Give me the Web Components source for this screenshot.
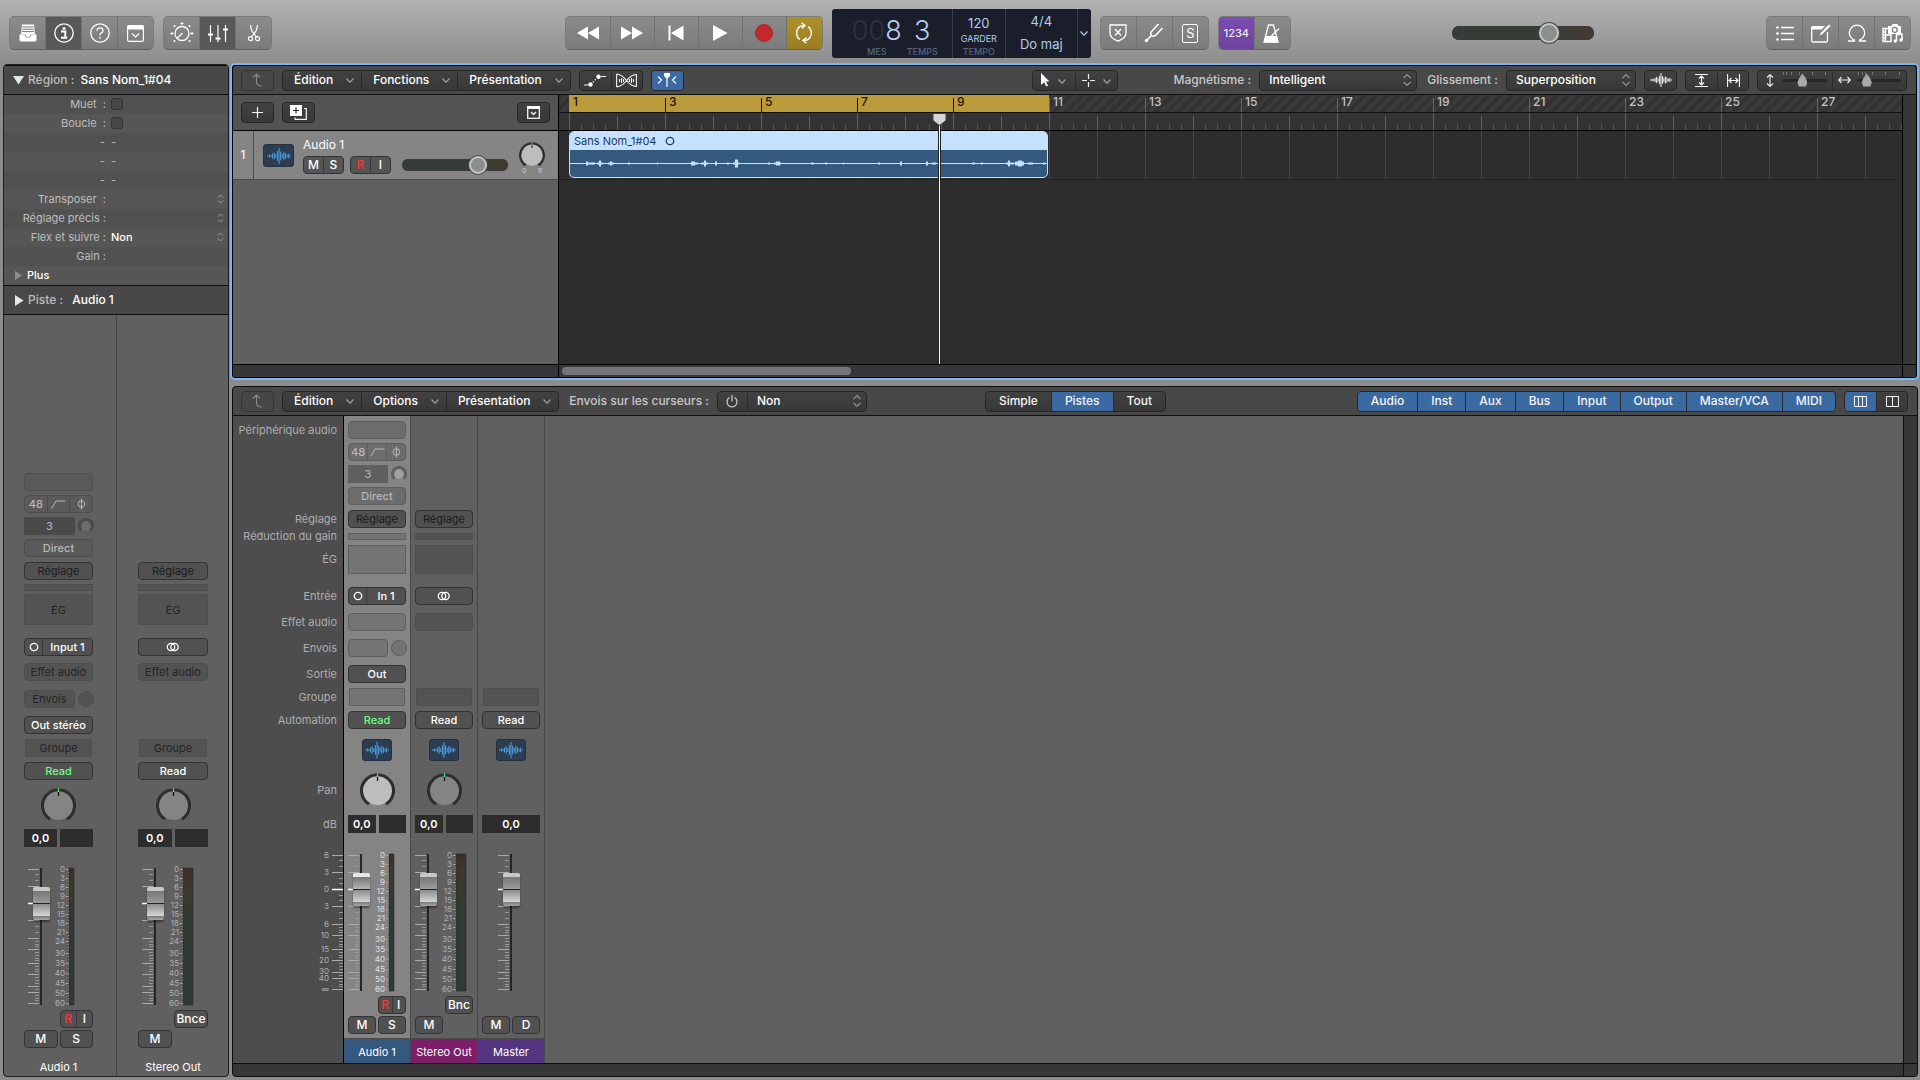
<!DOCTYPE html>
<html lang="fr">
<head>
<meta charset="utf-8">
<title>Sans Nom</title>
<style>
  * { box-sizing: border-box; }
  body {
    margin: 0;
    height: 100vh;
    display: flex;
    flex-direction: column;
    background: #8c8c8c;
    font: 12px/16px Inter, "Liberation Sans", sans-serif;
    color: #fff;
    overflow: hidden;
  }
  main {
    flex: 1;
    min-height: 0;
    display: flex;
    gap: 1px;
    padding: 0 1px 3px 3px;
  }
  .editors {
    flex: 1;
    min-width: 0;
    display: flex;
    flex-direction: column;
    gap: 6px;
  }
</style>
</head>
<body>
<control-bar></control-bar>
<main>
  <region-inspector></region-inspector>
  <div class="editors">
    <tracks-editor></tracks-editor>
    <mixer-editor></mixer-editor>
  </div>
</main>

<script>
/* Buttons passed into a group are styled by the group's ::slotted rules, so the reset skips them. */
const base = `
  * { box-sizing: border-box; }
  input, select { margin: 0; padding: 0; font: inherit; color: inherit; border: 0; background: none; }
  :where(button:not(tool-group > button, control-group > button)) {
    display: flex; align-items: center; justify-content: center;
    margin: 0; padding: 0; border: 0; background: none;
    font: inherit; color: inherit; white-space: nowrap;
  }
  svg { display: block; flex: none; }
  input[type=range] { appearance: none; -webkit-appearance: none; display: block; }
`;

class UiElement extends HTMLElement {
  styles = "";

  connectedCallback() {
    if (this.shadowRoot) {
      return;
    }
    this.attachShadow({ mode: "open" });
    this.shadowRoot.innerHTML = `<style>${base}${this.styles}</style>${this.render()}`;
  }

  render() {
    return "<slot></slot>";
  }
}

/* ---------- icons: [width, height, markup] ---------- */

const S = `fill="none" stroke="currentColor"`;
const WAVE = [2, 4, 3, 6, 9, 5, 12, 20, 11, 6, 10, 7, 4, 6, 2];

function waveIcon(w, h) {
  const step = w / WAVE.length;
  return WAVE.map((v, i) => {
    const len = (v / 20) * h;
    return `<path d="M${i * step + step / 2} ${(h - len) / 2}v${len}" ${S} stroke-width="1"/>`;
  }).join("");
}

const ICONS = {
  library: [18, 18, `<path d="M3 0.500h12l1 10h-4.500l-1 2.500h-3l-1-2.500H2z" fill="#fff"/><path d="M3.500 3h11M3.300 5.300h11.400M3 7.600h12" stroke="#777" stroke-width="1"/><path d="M0.500 10.500h5l1.500 3h4l1.500-3h5v5.500q0 1.500-1.500 1.500h-14q-1.500 0-1.500-1.500z" fill="#fff"/>`],
  info: [20, 20, `<circle cx="10" cy="10" r="9.200" ${S} stroke-width="1.300"/><circle cx="10" cy="5.500" r="1.600" fill="#fff"/><path d="M7 8.500h4.300v5.500M7 14.800h6.300" ${S} stroke-width="2"/>`],
  help: [20, 20, `<circle cx="10" cy="10" r="9.200" ${S} stroke-width="1.300"/><path d="M7 7.800q0-3 3-3t3 2.700q0 1.500-1.600 2.400T10 12.400" ${S} stroke-width="1.300"/><circle cx="10" cy="14.800" r="0.900" fill="#fff"/>`],
  panel: [17, 17, `<rect x="0.600" y="0.600" width="15.800" height="15.800" rx="1.500" ${S} stroke-width="1.200"/><path d="M0.500 0.500h16v4h-16z" fill="#fff"/><path d="M5 8.500l3.500 3.500L12 8.500" ${S} stroke-width="1.200"/>`],
  dial: [24, 22, `<circle cx="12" cy="11.500" r="7" ${S} stroke-width="1.300"/><path d="M7.500 16l5-5" ${S} stroke-width="1.300"/><path d="M12 0v3M10.500 1.500h3M2 10v3M.500 11.500h3M22 10v3M20.500 11.500h3" ${S}/><g fill="#fff"><circle cx="4.500" cy="4" r="1"/><circle cx="19.500" cy="4" r="1"/><circle cx="4.500" cy="19" r="1"/><circle cx="19.500" cy="19" r="1"/></g>`],
  sliders: [22, 19, `<path d="M3.500 1v17M11 1v17M18.500 1v17" ${S} stroke-width="1.200"/><path d="M1 10.500h5M8.500 14.500h5M16 5.500h5" ${S} stroke-width="2.200"/>`],
  scissors: [14, 18, `<path d="M3.500 1q.5 4 1.500 6l4.500 6M10.500 1q-.5 4-1.500 6l-4.500 6" ${S} stroke-width="1.200"/><circle cx="3.500" cy="14.700" r="2" ${S} stroke-width="1.200"/><circle cx="10.500" cy="14.700" r="2" ${S} stroke-width="1.200"/>`],
  rewind: [22, 14, `<path d="M11 0.500v13L0 7zM22 0.500v13L11 7z" fill="#fff"/>`],
  forward: [22, 14, `<path d="M0 0.500v13L11 7zM11 0.500v13L22 7z" fill="#fff"/>`],
  start: [16, 16, `<path d="M0.500 0.500h2v15h-2zM15.500 0.500v15L3 8z" fill="#fff"/>`],
  play: [16, 16, `<path d="M1 0v16l14.500-8z" fill="#fff"/>`],
  record: [18, 18, `<circle cx="9" cy="9" r="8.500" fill="#c2292b" stroke="#9d2a2a"/>`],
  cycle: [22, 22, `<path d="M7 17.500A8 8 0 0 1 7.500 4.200l4-.7M15 4.500A8 8 0 0 1 14.500 17.800l-4 .7" ${S} stroke-width="1.400"/><path d="M8.500 0.800l3.500 2.700-3 3M13.500 15.500l-3.500 3 3.500 2.700" ${S} stroke-width="1.400"/>`],
  shield: [18, 18, `<path d="M1 1h16v8q0 5-8 8.200Q1 14 1 9z" ${S} stroke-width="1.300"/><path d="M6 5l6 6.500M12 5l-6 6.500" ${S} stroke-width="1.300"/>`],
  fork: [20, 20, `<path d="M2 18l6-6M7.500 12.500q-2-2.500 1-5L14.500 1M7.500 12.500q2.500 2 5-1L18.500 5" ${S} stroke-width="1.500"/><circle cx="2.500" cy="17.500" r="1.700" fill="#fff"/>`],
  metronome: [18, 19, `<path d="M5.500 1h5l4.500 17H1z" ${S} stroke-width="1.300"/><path d="M2.500 12h11.500l1.500 6.500H1z" fill="#fff"/><path d="M7.500 13L16 4.500" ${S} stroke-width="1.300"/>`],
  list: [18, 17, `<path d="M5 2.500h13M5 8.500h13M5 14.500h13" ${S} stroke-width="1.300"/><g fill="#fff"><circle cx="1.500" cy="2.500" r="1.300"/><circle cx="1.500" cy="8.500" r="1.300"/><circle cx="1.500" cy="14.500" r="1.300"/></g>`],
  notes: [20, 19, `<path d="M16.500 8v8.500q0 1.500-1.500 1.500H2.200Q.7 18 .7 16.500V4" ${S} stroke-width="1.300"/><path d="M1.500 2H14l-3.500 3.500H0v-2Q0 2 1.500 2zM18 .5l1.500 1.500-8 8-3 1.500L10 8.500z" fill="#fff"/>`],
  loop: [18, 18, `<path d="M0 17h6.500v-1a7.600 7.600 0 1 1 5 0v1H18" ${S} stroke-width="1.300"/>`],
  media: [22, 20, `<path d="M1 5.500h8v13H1zM3.500 5.500v13M1 9h2.500M1 12h2.500M1 15h2.500M3.500 12h6" ${S} stroke-width="1.400"/><path d="M6 3h3.500l1-2h5l1 2H19v8H6z" fill="#fff"/><circle cx="12.800" cy="6.800" r="2.500" fill="#fff" stroke="#7e7e7e" stroke-width="1.300"/><path d="M12 11h10v9H10v-6z" fill="#828282"/><path d="M14.500 18v-6l5.500-1v6" ${S} stroke-width="1.500"/><circle cx="13.300" cy="18" r="1.700" fill="#fff"/><circle cx="19" cy="17" r="1.700" fill="#fff"/>`],
  back: [12, 14, `<path d="M1 4.500L4.500 1 8 4.500M4.500 1v8q0 4 5.500 4" ${S} stroke-width="1.100"/>`],
  down: [8, 5, `<path d="M0.500 0.500L4 4.200 7.500 0.500" ${S} stroke-width="1.200"/>`],
  updown: [8, 12, `<path d="M0.500 4L4 0.700 7.500 4M0.500 8L4 11.300 7.500 8" ${S} stroke-width="1.100"/>`],
  automation: [22, 13, `<path d="M0 11h4M17 2.500h5" ${S} stroke-width="1.200"/><g fill="#fff"><circle cx="6.500" cy="10.500" r="2.200"/><circle cx="9.300" cy="7.800" r=".7"/><circle cx="11.300" cy="5.800" r=".7"/><circle cx="14.500" cy="2.800" r="2.200"/></g>`],
  flex: [21, 15, `<path d="M.600 1v13M20.400 1v13M.600 1q6 1 10 6.500t10 6M.600 14q6-1 10-6.500t10-6M3.500 6v3M5.500 5v5M7.500 6v3M13.500 6v3M15.500 5v5M17.500 6v3" ${S} stroke-width="1.100"/>`],
  catch: [20, 14, `<path d="M1 3.500L4.500 7 1 10.500M19 3.500L15.500 7l3.500 3.500M10 5v9" ${S} stroke-width="1.300"/><path d="M7 0h6v3l-3 3-3-3z" fill="#fff"/>`],
  pointer: [9, 14, `<path d="M0 0l8.500 8.500H5l2 4.300-1.800.8L3.200 9.300 0 12z" fill="#fff"/>`],
  cross: [13, 13, `<path d="M6.500 0v5M6.500 8v5M0 6.500h5M8 6.500h5" ${S} stroke-width="1.200"/>`],
  wave: [22, 14, waveIcon(22, 14)],
  vfit: [13, 13, `<path d="M0 .5h13M0 12.500h13M6.500 2v9M4 4.500L6.500 2 9 4.500M4 8.500L6.500 11 9 8.500" ${S} stroke-width="1.200"/>`],
  hfit: [13, 13, `<path d="M.5 0v13M12.500 0v13M2 6.500h9M4.500 4L2 6.500 4.500 9M8.500 4L11 6.500 8.500 9" ${S} stroke-width="1.200"/>`],
  varrow: [8, 13, `<path d="M4 1v11M1 3.500L4 .700l3 2.800M1 9.500l3 2.800 3-2.800" ${S} stroke-width="1.100"/>`],
  harrow: [13, 8, `<path d="M1 4h11M3.500 1L.700 4l2.800 3M9.500 1l2.800 3-2.800 3" ${S} stroke-width="1.100"/>`],
  plus: [11, 11, `<path d="M5.500 0v11M0 5.500h11" ${S} stroke-width="1.200"/>`],
  duplicate: [17, 15, `<path d="M0 0h12v11H0z" fill="#fff"/><path d="M6 2.500v6M3 5.500h6" stroke="#333" stroke-width="1.200"/><path d="M14 3.500h2.300v10.800H5V12.500" ${S} stroke-width="1.200"/>`],
  config: [13, 13, `<rect x="0.700" y="0.700" width="11.600" height="11.600" ${S} stroke-width="1.300"/><path d="M0 0h13v3H0z" fill="#fff"/><path d="M4 6l2.500 2.500L9 6" ${S} stroke-width="1.300"/>`],
  power: [12, 13, `<path d="M3.500 2.500a5 5 0 1 0 5 0M6 0v6.500" ${S} stroke-width="1.200"/>`],
  cols3: [13, 11, `<path d="M.500.500h12v10H.500zM4.500.500v10M8.500.500v10" ${S}/>`],
  cols2: [13, 11, `<path d="M.500.500h12v10H.500zM6.500.500v10" ${S}/>`],
  mono: [10, 10, `<circle cx="5" cy="5" r="3.700" ${S} stroke-width="1.300"/>`],
  stereo: [14, 10, `<circle cx="5" cy="5" r="3.700" ${S} stroke-width="1.300"/><circle cx="8.500" cy="5" r="3.700" ${S} stroke-width="1.300"/>`],
  lowcut: [15, 9, `<path d="M.500 8.500L5 1h9.500" ${S}/>`],
  phase: [9, 12, `<circle cx="4.500" cy="6" r="3.300" ${S}/><path d="M4.500 0.500v11" ${S}/>`],
};

class AppIcon extends UiElement {
  styles = `:host { display: inline-flex; flex: none; }`;
  render() {
    const [w, h, body] = ICONS[this.getAttribute("name")];
    return `<svg width="${w}" height="${h}" viewBox="0 0 ${w} ${h}">${body}</svg>`;
  }
}
customElements.define("app-icon", AppIcon);

const icon = (name) => `<app-icon name="${name}"></app-icon>`;

/* ---------- top control bar ---------- */

class ControlGroup extends UiElement {
  styles = `
    :host {
      display: flex;
      height: 34px;
      border: 1px solid #7a7a7a;
      border-bottom-color: #606060;
      border-radius: 5px;
      background: linear-gradient(#8b8b8b, #7b7b7b);
      overflow: hidden;
      flex: none;
    }
    ::slotted(button) {
      display: flex; align-items: center; justify-content: center;
      width: 36px; margin: 0; padding: 0; border: 0; background: none; color: #fff;
      font: 13px/16px Inter, sans-serif;
    }
    ::slotted(button:first-child) { width: 35px; }
    :host([wide]) ::slotted(button:not(:last-child)) { width: 44px; }
    ::slotted(button:not(:first-child)) { border-left: 1px solid #727272; }
    ::slotted(button.on) { background: #585858; }
    ::slotted(button.gold) { background: linear-gradient(#ae9029, #9c7e22); }
    ::slotted(button.purple) { background: linear-gradient(#7c4bb2, #70429f); }
  `;
}
customElements.define("control-group", ControlGroup);

class LcdDisplay extends UiElement {
  styles = `
    :host {
      display: flex;
      height: 49px;
      border-radius: 3px;
      background: #1a1e2a;
      color: #b3cdeb;
      text-align: center;
      flex: none;
    }
    section { display: flex; flex-direction: column; align-items: center; justify-content: space-between; padding: 6px 0 1px; border-right: 1px solid #343f55; }
    .pos { width: 121px; flex-direction: row; justify-content: center; gap: 5px; padding: 6px 0 1px 6px; }
    .pos div { display: flex; flex-direction: column; justify-content: space-between; align-items: center; height: 100%; }
    .big { font-size: 27px; font-weight: 300; line-height: 32px; }
    .big i { font-style: normal; color: #2c3242; }
    small { font-size: 9px; line-height: 10px; color: #56647f; font-weight: 500; }
    .tempo { width: 53px; }
    .sig { width: 72px; padding: 4px 0 6px; }
    .mid { font-size: 9px; line-height: 12px; }
    b { font-weight: 400; font-size: 13px; line-height: 16px; }
    button { width: 13px; }
  `;
  render() {
    return `
      <section class="pos">
        <div><span class="big"><i>00</i>8</span><small>MES</small></div>
        <div><span class="big">3</span><small>TEMPS</small></div>
      </section>
      <section class="tempo"><b>120</b><span class="mid">GARDER</span><small>TEMPO</small></section>
      <section class="sig"><b>4/4</b><b>Do maj</b></section>
      <button aria-label="Affichage">${icon("down")}</button>`;
  }
}
customElements.define("lcd-display", LcdDisplay);

/* Horizontal volume pill: --w, --h and --thumb set its size. */
class VolumeSlider extends UiElement {
  styles = `
    :host { display: flex; align-items: center; flex: none; }
    input {
      width: var(--w); height: var(--h);
      border-radius: 99px;
      background: linear-gradient(90deg, #363d38 70%, #403a33 92%);
      box-shadow: inset 0 0 0 1px #3a3c3a;
    }
    input::-webkit-slider-thumb {
      -webkit-appearance: none;
      width: var(--thumb); height: var(--thumb);
      border-radius: 50%;
      border: 2px solid #c6c6c6;
      background: #8d8f8d;
      box-shadow: 0 0 0 1px #4a4a4a;
    }
  `;
  render() {
    return `<input type="range" aria-label="${this.getAttribute("label")}" value="${this.getAttribute("value")}">`;
  }
}
customElements.define("volume-slider", VolumeSlider);

class ControlBar extends UiElement {
  styles = `
    :host {
      display: flex;
      align-items: center;
      flex: none;
      height: 63px;
      padding: 3px 9px 0;
      background: linear-gradient(#b2b2b2, #8d8d8d);
    }
    .gap { flex: 0 0 9px; }
    .s { width: 16px; height: 19px; border: 1px solid #fff; border-radius: 2px; line-height: 17px; }
    .count { font-size: 11px; }
    volume-slider { --w: 142px; --h: 14px; --thumb: 20px; }
  `;
  render() {
    return `
      <control-group>
        <button aria-label="Bibliothèque">${icon("library")}</button>
        <button class="on" aria-label="Inspecteur">${icon("info")}</button>
        <button aria-label="Aide">${icon("help")}</button>
        <button aria-label="Barre d’outils">${icon("panel")}</button>
      </control-group>
      <span class="gap"></span>
      <control-group>
        <button aria-label="Smart Controls">${icon("dial")}</button>
        <button class="on" aria-label="Table de mixage">${icon("sliders")}</button>
        <button aria-label="Éditeurs">${icon("scissors")}</button>
      </control-group>
      <span style="flex:29"></span>
      <control-group wide>
        <button aria-label="Retour">${icon("rewind")}</button>
        <button aria-label="Avance">${icon("forward")}</button>
        <button aria-label="Début">${icon("start")}</button>
        <button aria-label="Lecture">${icon("play")}</button>
        <button aria-label="Enregistrer">${icon("record")}</button>
        <button class="gold" aria-label="Cycle">${icon("cycle")}</button>
      </control-group>
      <span class="gap"></span>
      <lcd-display></lcd-display>
      <span class="gap"></span>
      <control-group>
        <button aria-label="Remplacer">${icon("shield")}</button>
        <button aria-label="Accordeur">${icon("fork")}</button>
        <button aria-label="Solo"><span class="s">S</span></button>
      </control-group>
      <span class="gap"></span>
      <control-group>
        <button class="purple"><span class="count">1234</span></button>
        <button aria-label="Métronome">${icon("metronome")}</button>
      </control-group>
      <span style="flex:16"></span>
      <volume-slider label="Volume principal" value="71"></volume-slider>
      <span style="flex:17"></span>
      <control-group>
        <button aria-label="Listes">${icon("list")}</button>
        <button aria-label="Bloc-notes">${icon("notes")}</button>
        <button aria-label="Boucles">${icon("loop")}</button>
        <button aria-label="Navigateurs">${icon("media")}</button>
      </control-group>`;
  }
}
customElements.define("control-bar", ControlBar);

/* ---------- editor toolbar pieces ---------- */

class ToolGroup extends UiElement {
  styles = `
    :host {
      display: flex;
      height: 21px;
      border: 1px solid #262626;
      border-radius: 4px;
      background: linear-gradient(#414141, #383838);
      color: #f4f4f4;
      overflow: hidden;
      flex: none;
    }
    :host([dim]) { color: #8a8a8a; border-color: #343434; background: #464646; }
    ::slotted(*) {
      display: flex; align-items: center; justify-content: center;
      min-width: 31px; margin: 0; padding: 0; border: 0; background: none; color: inherit;
      font: 500 12px/16px Inter, sans-serif;
      white-space: nowrap;
    }
    ::slotted(:not(:first-child)) { border-left: 1px solid #2b2b2b; }
    ::slotted(.text) { padding: 0 13px; }
    ::slotted(.tool) { gap: 8px; width: 42px; }
    ::slotted(.on) { background: #3b6aa3; }
  `;
}
customElements.define("tool-group", ToolGroup);

class MenuGroup extends UiElement {
  styles = `
    :host {
      display: flex;
      height: 21px;
      border: 1px solid #262626;
      border-radius: 4px;
      background: linear-gradient(#414141, #383838);
      font-weight: 500;
      flex: none;
    }
    button { padding: 0 7px 0 11px; gap: 13px; }
    button + button { border-left: 1px solid #2b2b2b; }
    app-icon { color: #a0a0a0; }
  `;
  render() {
    return this.getAttribute("items").split(",")
      .map((t) => `<button>${t}${icon("down")}</button>`).join("");
  }
}
customElements.define("menu-group", MenuGroup);

class PopUp extends UiElement {
  styles = `
    :host { display: flex; align-items: center; gap: 8px; flex: none; color: #c8c8c8; font-weight: 500; }
    .box {
      display: flex;
      height: 21px;
      border: 1px solid #262626;
      border-radius: 4px;
      background: linear-gradient(#414141, #383838);
      color: #fff;
    }
    .box button { width: 30px; border-right: 1px solid #2b2b2b; color: #d0d0d0; }
    .field { display: grid; width: var(--w); align-items: center; }
    select { appearance: none; grid-area: 1 / 1; height: 19px; padding-left: 9px; }
    .field app-icon { grid-area: 1 / 1; justify-self: end; margin-right: 5px; color: #9a9a9a; pointer-events: none; }
  `;
  render() {
    const power = this.hasAttribute("power") ? `<button aria-label="Activer">${icon("power")}</button>` : "";
    return `
      <label for="s">${this.getAttribute("label")}</label>
      <div class="box">${power}
        <div class="field">
          <select id="s"><option>${this.getAttribute("value")}</option></select>${icon("updown")}
        </div>
      </div>`;
  }
}
customElements.define("pop-up", PopUp);

class ZoomSlider extends UiElement {
  styles = `
    :host { display: flex; gap: 6px; align-items: center; justify-content: center; width: 74px; color: #a5a5a5; }
    .arrow { width: 13px; display: flex; justify-content: center; }
    .scale { display: grid; }
    .scale > * { grid-area: 1 / 1; }
    input { width: 44px; height: 3px; border-radius: 2px; background: #262626; align-self: center; }
    input::-webkit-slider-thumb {
      -webkit-appearance: none;
      width: 10px; height: 13px;
      background: #a9a9a9;
      clip-path: polygon(50% 0, 85% 38%, 100% 70%, 85% 100%, 15% 100%, 0 70%, 15% 38%);
    }
  `;
  render() {
    const ticks = this.getAttribute("ticks").split(",").map((x) => `M${x}.500 0v3`).join("");
    return `
      <span class="arrow">${icon(this.getAttribute("arrow"))}</span>
      <div class="scale">
        <svg width="44" height="17"><path d="${ticks}" stroke="#777"/></svg>
        <input type="range" aria-label="${this.getAttribute("label")}" value="${this.getAttribute("value")}">
      </div>`;
  }
}
customElements.define("zoom-slider", ZoomSlider);

class WaveBadge extends UiElement {
  styles = `
    :host {
      display: flex; align-items: center; justify-content: center;
      width: 30px; height: 22px;
      border: 1px solid #24303d;
      border-radius: 3px;
      background: #2c3d50;
      color: #4da3e8;
    }
  `;
  render() {
    return `<svg width="24" height="16" viewBox="0 0 24 16">${waveIcon(24, 16)}</svg>`;
  }
}
customElements.define("wave-badge", WaveBadge);

class PanKnob extends UiElement {
  styles = `
    :host { display: block; width: var(--knob, 35px); height: var(--knob, 35px); }
    svg { width: 100%; height: 100%; }
    .ring { fill: none; stroke: #2e2e2e; stroke-width: 3; }
    .cap { fill: var(--knob-cap, #848484); }
  `;
  render() {
    return `
      <svg viewBox="0 0 35 35">
        <circle class="cap" cx="17.500" cy="17.500" r="14.500"/>
        <path class="ring" d="M9 31.300A16 16 0 1 1 26 31.300"/>
        <path d="M17.500 0v4" stroke="#4fd86e" stroke-width="1.300"/>
        <path d="M17.500 4v4" stroke="#111" stroke-width="1.300"/>
      </svg>`;
  }
}
customElements.define("pan-knob", PanKnob);

/* ---------- faders ---------- */

const MAJOR = [1, 18, 52, 70, 81, 95, 106, 118, 124, 135];
const MINOR = [6, 12, 24, 29, 41, 46, 58, 64, 73, 76, 78, 84, 87, 90, 92, 98, 101, 103, 109, 112, 115, 121, 127, 130, 132];
const METER = { 0: 1, 3: 10, 6: 19, 9: 28, 12: 37, 15: 46, 18: 55, 21: 64, 24: 73, 30: 85, 35: 95, 40: 105, 45: 115, 50: 125, 60: 135 };

function ticks(right) {
  const major = MAJOR.map((y) => `M${right - 11} ${y}.500h11`).join("");
  const minor = MINOR.map((y) => `M${right - 4} ${y}.500h4`).join("");
  return `<path d="${major}" stroke="#aaa"/><path d="${minor}" stroke="#969696"/>
    <path d="M${right - 11} 35.500h11" stroke="#fff" stroke-width="1.500"/>`;
}

class LevelFader extends UiElement {
  styles = `
    :host { display: grid; justify-content: start; }
    svg, input { grid-area: 1 / 1; }
    svg { overflow: visible; }
    text { font-size: 8px; fill: var(--scale, #b0b0b0); text-anchor: end; }
    input {
      writing-mode: vertical-lr;
      direction: rtl;
      width: 17px;
      height: 137px;
      margin-left: 5px;
      background: linear-gradient(90deg, transparent 7px, #262626 7px, #262626 9px, transparent 9px);
    }
    input::-webkit-slider-thumb {
      -webkit-appearance: none;
      width: 17px; height: 33px;
      border-radius: 2px;
      background:
        linear-gradient(transparent 16px, #222 16px, #222 17px, transparent 17px),
        linear-gradient(var(--cap-top, #c8c8c8) 4px, #777 4px, var(--cap-mid, #9c9c9c) 16px, #8c8c8c 17px, #d4d6d8 29px, #777 29px, #a8a8a8);
      box-shadow: 0 2px 2px rgba(0, 0, 0, .4);
    }
  `;
  render() {
    const meter = this.getAttribute("meter");
    const w = meter === "stereo" ? 10 : 5;
    const numbers = Object.entries(METER)
      .map(([n, y]) => `<text x="37" y="${y + 3}">${n}</text><path d="M38 ${y}.500h3" stroke="#a8a8a8"/>`).join("");
    const scale = meter ? `
      ${numbers}
      <path d="M40.500 1v136" stroke="#a8a8a8" stroke-dasharray="1 2"/>
      <defs><linearGradient id="g" x2="0" y2="1">
        <stop offset="0" stop-color="#3d2d2c"/><stop offset=".12" stop-color="#3f372c"/>
        <stop offset=".4" stop-color="#2f3a33"/><stop offset="1" stop-color="#303a35"/>
      </linearGradient></defs>
      <rect x="41" width="${w}" height="137" fill="url(#g)" stroke="#2b2b2b" stroke-width=".6"/>` : "";
    return `
      <svg width="${meter ? 52 : 22}" height="137">${ticks(11)}${scale}</svg>
      <input type="range" aria-label="Volume" max="104" value="85">`;
  }
}
customElements.define("level-fader", LevelFader);

/* ---------- channel strip ---------- */

/* Each slot names its grid row; the rows come from --rows so the strips and the label column line up. */
const ROW = {
  device: 1, preamp: 2, input: 3, direct: 4, setting: 5, gain: 6, eq: 7, source: 8, fx: 9,
  sends: 10, output: 11, group: 12, auto: 13, icon: 14, pan: 15, db: 16, fader: 17, rec: 18, mute: 19, name: 20,
};

const STRIPS = {
  audio: {
    long: { setting: "Réglage", eq: "ÉG", source: "Input 1", fx: "Effet audio", sends: "Envois", output: "Out stéréo", group: "Groupe" },
    short: { setting: "Réglage", eq: "", source: "In 1", fx: "", sends: "", output: "Out", group: "" },
  },
  out: {
    long: { setting: "Réglage", eq: "ÉG", fx: "Effet audio", group: "Groupe" },
    short: { setting: "Réglage", eq: "", fx: "", group: "" },
  },
  master: { short: { group: "" } },
};

class ChannelStrip extends UiElement {
  styles = `
    :host {
      display: grid;
      grid-template-rows: var(--rows);
      grid-template-columns: minmax(0, 1fr);
      align-items: start;
      align-content: start;
      font-size: 11px;
      line-height: 14px;
      --soft: #5a5a5a; --soft-line: #4e4e4e; --off: #535353;
    }
    :host([selected]) {
      background: #848484;
      --soft: #6c6c6c; --soft-line: #5e5e5e; --off: #747474; --knob-cap: #bdbdbd;
      --cap-top: #e6e6e6; --cap-mid: #b4b4b4; --scale: #e0e0e0;
    }
    .row { display: flex; padding: 0 var(--side, 4px); gap: 2px; }
    .slot { flex: 1; height: 18px; border: 1px solid #333; border-radius: 4px; background: #515151; min-width: 0; overflow: hidden; font-weight: 500; }
    .soft { background: var(--soft); border-color: var(--soft-line); color: #b8b8b8; }
    .off { background: var(--off); border-color: var(--soft-line); color: #242424; font-weight: 400; }
    .setting { color: #1c1c1c; font-weight: 400; }
    .group { margin: 0 1px; border-radius: 1px; }
    .gain { height: 7px; border-radius: 0; }
    .eq { height: var(--eq, 29px); border-radius: 0; }
    .split { display: flex; }
    .split button { flex: 1; height: 16px; }
    .split button + button { border-left: 1px solid #3a3a3a; }
    .split.soft button + button { border-color: var(--soft-line); }
    .source button:first-child { flex: 0 0 17px; }
    .num { flex: 1; height: 18px; background: #4a4a4a; color: #b8b8b8; min-width: 0; text-align: center; }
    :host([selected]) .num { background: #5f5f5f; }
    .dial { width: 16px; height: 16px; margin: 1px -1px 0 1px; }
    .trim { border: 3px solid #4a4a4a; border-bottom-color: transparent; border-radius: 50%; background: padding-box #6c6c6c; }
    :host([selected]) .trim { background: padding-box #a0a0a0; border-color: #5f5f5f #5f5f5f transparent; }
    .send { border: 1px solid var(--soft-line); border-radius: 50%; background: var(--off); }
    .green { color: #6dff80; }
    .mid { justify-content: center; }
    .db { gap: 3px; }
    .db input { flex: 1; min-width: 0; height: 18px; background: #2d2d2d; text-align: center; font-weight: 600; }
    .half { font-size: 12px; }
    .half .slot { flex: 0 0 calc(50% - 1px); }
    .end { justify-content: end; }
    .red { color: #f03a3a; }
    level-fader { margin-left: calc(var(--side, 4px) + var(--inset, 0px)); }
    .name { height: 25px; text-align: center; line-height: 26px; border-top: var(--name-line, 1px solid #4a4a4a); background: var(--name); }
  `;

  slot(kind, cls, body) {
    return `<div class="row" style="grid-row:${ROW[kind]}"><button class="slot ${cls}">${body}</button></div>`;
  }

  render() {
    const type = this.getAttribute("type");
    const size = this.getAttribute("size") || "short";
    const t = STRIPS[type][size];
    const audio = type === "audio";
    const html = [];
    const row = (kind, cls, body) => html.push(`<div class="row ${cls}" style="grid-row:${ROW[kind]}">${body}</div>`);

    if (audio) {
      html.push(this.slot("device", "soft", ""));
      row("preamp", "", `<div class="slot soft split"><button>48</button><button aria-label="Coupe-bas">${icon("lowcut")}</button><button aria-label="Phase">${icon("phase")}</button></div>`);
      row("input", "", `<input class="num" value="3" aria-label="Entrée"><span class="dial trim"></span>`);
      html.push(this.slot("direct", "soft", "Direct"));
    }
    if (type !== "master") {
      html.push(this.slot("setting", "setting", t.setting));
      html.push(this.slot("gain", "off gain", ""));
      html.push(this.slot("eq", "off eq", t.eq));
      row("source", "", audio
        ? `<div class="slot split source"><button aria-label="Mono">${icon("mono")}</button><button>${t.source}</button></div>`
        : `<button class="slot" aria-label="Stéréo">${icon("stereo")}</button>`);
      html.push(this.slot("fx", "off", t.fx));
    }
    if (audio) {
      row("sends", "", `<button class="slot off">${t.sends}</button><span class="dial send"></span>`);
      html.push(this.slot("output", "", t.output));
    }
    html.push(this.slot("group", "off group", t.group));
    html.push(this.slot("auto", audio ? "green" : "", "Read"));
    if (size === "short") {
      row("icon", "mid", `<wave-badge></wave-badge>`);
    }
    if (type !== "master") {
      row("pan", "mid", `<pan-knob></pan-knob>`);
    }
    row("db", "db", `<input value="0,0" aria-label="dB">` + (type === "master" ? "" : `<input aria-label="Crête">`));
    const meter = { audio: "mono", out: "stereo", master: "" }[type];
    html.push(`<level-fader style="grid-row:${ROW.fader}" meter="${meter}"></level-fader>`);
    if (audio) {
      row("rec", "half end", `<div class="slot split"><button class="red">R</button><button>I</button></div>`);
    } else if (type === "out") {
      row("rec", "half end", `<button class="slot">${size === "long" ? "Bnce" : "Bnc"}</button>`);
    }
    const second = { audio: "S", out: "", master: "D" }[type];
    row("mute", "half", `<button class="slot">M</button>` + (second && `<button class="slot">${second}</button>`));
    html.push(`<div class="name" style="grid-row:${ROW.name}">${this.getAttribute("name")}</div>`);
    return html.join("");
  }
}
customElements.define("channel-strip", ChannelStrip);

/* ---------- left inspector ---------- */

class RegionInspector extends UiElement {
  styles = `
    :host {
      display: flex;
      flex-direction: column;
      flex: 0 0 226px;
      margin-top: 1px;
      border: 1px solid #1e1e1e;
      border-radius: 4px;
      background: #606060;
      overflow: hidden;
      color: #bdbdbd;
    }
    h2 {
      display: flex; align-items: center; gap: 6px;
      margin: 0; padding: 0 9px; height: 29px;
      background: #484848;
      border-bottom: 1px solid #0d0d0d;
      font-size: 12px; font-weight: 500;
    }
    h2:not(:first-child) { border-top: 1px solid #0d0d0d; height: 30px; }
    h2 b, .more { font-weight: 500; color: #fff; }
    h2 svg { margin-right: -2px; }
    .row {
      display: grid;
      grid-template-columns: 102px 1fr 11px;
      align-items: center;
      height: 19px;
      padding-bottom: 2px;
      background: #565656;
      font-size: 11px; line-height: 14px;
    }
    .row:nth-of-type(odd) { background: #515151; }
    .row label { text-align: right; white-space: pre; }
    .dash label { grid-column: 1 / 3; text-align: center; padding-right: 5px; }
    input[type=checkbox] { appearance: none; width: 12px; height: 12px; margin-left: 5px; border: 1px solid #333; border-radius: 3px; background: #474747; }
    select { appearance: none; margin-left: 5px; color: #fff; font-weight: 500; justify-self: start; }
    .row button { grid-column: 3; color: #a0a0a0; justify-content: start; }
    .more { display: flex; gap: 4px; padding-left: 11px; }
    .strips {
      flex: 1;
      display: grid;
      grid-template-columns: 113px 1fr;
      align-items: end;
      color: #fff;
      --rows: 22px 22px 22px 23px 22px 10px 44px 25px 27px 26px 23px 23px 26px 0px 41px 39px 142px 20px 24px 22px;
      --eq: 31px;
    }
    channel-strip { --side: 20px; --name: none; --name-line: none; }
    .strips::before { content: ""; grid-area: 1 / 1; align-self: stretch; border-right: 1px solid #454545; }
    channel-strip:first-child { grid-area: 1 / 1; width: 109px; --inset: 4px; }
    channel-strip:last-child { width: 110px; --inset: 4px; justify-self: end; }
  `;
  render() {
    const row = (label, control = "") => `<div class="row"><label>${label}</label>${control}</div>`;
    const step = (n) => `<button aria-label="${n}"><svg width="8" height="10"><path d="M1 3.500L3.500 1 6 3.500M1 6.500L3.500 9 6 6.500" ${S}/></svg></button>`;
    return `
      <h2><svg width="11" height="9"><path d="M0 0h11L5.500 8.500z" fill="#e6e6e6"/></svg>
        Région : <b>Sans Nom_1#04</b></h2>
      <div class="rows">
        <div class="row"><label for="mute">Muet&nbsp; :</label><input type="checkbox" id="mute"></div>
        <div class="row"><label for="loop">Boucle&nbsp; :</label><input type="checkbox" id="loop"></div>
        <div class="row dash"><label>-&nbsp; -</label></div>
        <div class="row dash"><label>-&nbsp; -</label></div>
        <div class="row dash"><label>-&nbsp; -</label></div>
        ${row("Transposer&nbsp; :", step("Transposer"))}
        ${row("Réglage précis :", step("Réglage précis"))}
        <div class="row"><label for="flex">Flex et suivre :</label><select id="flex"><option>Non</option></select>${step("Flex")}</div>
        ${row("Gain :")}
        <div class="row"><span class="more"><svg width="8" height="14"><path d="M0 3l7 4.500L0 12z" fill="#8c8c8c"/></svg>Plus</span></div>
      </div>
      <h2><svg width="11" height="11"><path d="M2 0v11l8.500-5.500z" fill="#e6e6e6"/></svg>
        Piste :&nbsp; <b>Audio 1</b></h2>
      <div class="strips">
        <channel-strip type="audio" size="long" name="Audio 1"></channel-strip>
        <channel-strip type="out" size="long" name="Stereo Out"></channel-strip>
      </div>`;
  }
}
customElements.define("region-inspector", RegionInspector);

/* ---------- tracks area ---------- */

class TrackHeader extends UiElement {
  styles = `
    :host {
      display: flex;
      align-items: stretch;
      height: 49px;
      background: #858585;
      border-bottom: 1px solid #4c4c4c;
    }
    .n { width: 21px; border-right: 1px solid #4c4c4c; display: flex; align-items: center; justify-content: center; }
    wave-badge { width: 31px; height: 23px; margin: 13px 9px 0 9px; }
    .main { display: grid; grid-template-rows: 16px 18px; gap: 3px; padding-top: 6px; }
    .buttons { display: flex; gap: 6px; }
    .pair { display: flex; width: 41px; height: 18px; border: 1px solid #333; border-radius: 4px; background: #555; font-weight: 500; }
    .pair button { flex: 1; }
    .pair button + button { border-left: 1px solid #3a3a3a; }
    .red { color: #f03a3a; }
    volume-slider { --w: 106px; --h: 12px; --thumb: 18px; margin: 20px 11px 0 11px; }
    .pan { padding-top: 11px; --knob: 26px; --knob-cap: #bdbdbd; }
    .lr { display: flex; justify-content: space-between; font-size: 6px; line-height: 6px; padding: 0 3px; color: #d0d0d0; }
  `;
  render() {
    return `
      <span class="n">1</span>
      <wave-badge></wave-badge>
      <div class="main">
        <span>Audio 1</span>
        <div class="buttons">
          <span class="pair"><button>M</button><button>S</button></span>
          <span class="pair"><button class="red">R</button><button>I</button></span>
        </div>
      </div>
      <volume-slider label="Volume de piste" value="76"></volume-slider>
      <div class="pan"><pan-knob></pan-knob><div class="lr"><span>G</span><span>R</span></div></div>`;
  }
}
customElements.define("track-header", TrackHeader);

class TimeRuler extends UiElement {
  styles = `
    :host { display: block; height: 36px; background: #333; border-bottom: 1px solid #000; overflow: hidden; }
    .bars {
      display: flex;
      height: 18px;
      padding-left: 10px;
      border-bottom: 1px solid #111;
      background: repeating-linear-gradient(135deg, #323232 0 4px, #3a3a3a 4px 8px);
      font-weight: 500; line-height: 14px;
      color: #c4c4c4;
    }
    .bars span { flex: 0 0 96px; padding-left: 4px; background: linear-gradient(#666, #666) 0 100% / 1px 14px no-repeat; }
    .bars .in { color: #1c1608; background: linear-gradient(#111, #111) 0 100% / 1px 14px no-repeat #bb9a3c; }
    .bars .in:first-child { background: #bb9a3c; }
  `;
  render() {
    let bars = "";
    for (let n = 1; n < 28; n += 2) {
      bars += `<span${n < 11 ? ' class="in"' : ""}>${n}</span>`;
    }
    return `
      <div class="bars">${bars}</div>
      <svg width="100%" height="17">
        <defs><pattern id="t" x="10" width="96" height="17" patternUnits="userSpaceOnUse">
          <path d="M.500 0v17" stroke="#606060"/>
          <path d="M48.500 3v14" stroke="#606060"/>
          <path d="M12.500 11v6M24.500 11v6M36.500 11v6M60.500 11v6M72.500 11v6M84.500 11v6" stroke="#565656"/>
        </pattern></defs>
        <rect x="10" width="100%" height="17" fill="url(#t)"/>
      </svg>`;
  }
}
customElements.define("time-ruler", TimeRuler);

/* Peaks of the recorded region: [x, half height, width]. */
const PEAKS = [
  [16, 2, 2], [18, 1, 5], [22, 1, 3], [29, 3, 2], [27, 1, 6], [40, 2, 2], [38, 1, 6], [58, 1, 2], [87, 1, 1],
  [121, 2, 4], [125, 1, 3], [134, 3, 2], [131, 1, 7], [145, 2, 2], [157, 1, 2], [163, 1, 6], [165, 4, 3],
  [198, 1, 2], [204, 1, 7], [206, 2, 4], [241, 1, 3], [255, 1, 2], [273, 1, 1], [308, 1, 2], [330, 2, 2], [356, 2, 2],
  [362, 1, 4], [369, 3, 2], [402, 1, 3], [411, 1, 2], [438, 3, 2], [436, 1, 8], [448, 3, 4], [445, 2, 9], [458, 1, 5], [473, 1, 2],
];

class AudioRegion extends UiElement {
  styles = `
    :host {
      display: block;
      width: 479px; height: 47px;
      border: 1px solid #c6e1ff;
      border-radius: 5px;
      background: #35587e;
      overflow: hidden;
    }
    header {
      display: flex; align-items: center; gap: 9px;
      height: 18px; padding: 0 4px;
      background: #c6e1ff;
      color: #1b3a5c;
      font-size: 11px; line-height: 14px;
    }
  `;
  render() {
    const peaks = PEAKS.map(([x, h, w]) => `<rect x="${x}" y="${13.5 - h}" width="${w}" height="${h * 2}"/>`).join("");
    return `
      <header><slot></slot>${icon("mono")}</header>
      <svg width="478" height="27" fill="#c6e1ff"><path d="M0 13h478v1H0z"/>${peaks}</svg>`;
  }
}
customElements.define("audio-region", AudioRegion);

class TracksEditor extends UiElement {
  styles = `
    :host {
      display: flex;
      flex-direction: column;
      flex: 0 0 317px;
      border: 2px solid #7db6f5;
      border-radius: 5px;
      background: #000;
      padding: 1px;
    }
    .bar { display: flex; align-items: center; height: 29px; padding: 0 9px 0 8px; background: #484848; border-bottom: 1px solid #111; border-radius: 3px 3px 0 0; }
    .bar > * + * { margin-left: 8px; }
    .bar > .push { margin-left: auto; }
    .bar > .magnet { margin-left: 56px; }
    .bar > .wide { margin-left: 10px; }
    .chev { color: #a0a0a0; }
    .body { flex: 1; min-height: 0; display: grid; grid-template-columns: 325px minmax(0, 1fr) 13px; grid-template-rows: minmax(0, 1fr) 12px; gap: 1px; }
    .heads { background: #606060; }
    .tools { display: flex; gap: 8px; align-items: center; height: 36px; padding: 0 8px; background: #535353; border-bottom: 1px solid #000; }
    .tools > :last-child { margin-left: auto; }
    .time { position: relative; background: #2d2d2d; overflow: hidden; }
    .lane {
      height: 49px; padding-left: 10px;
      border-bottom: 1px solid #222;
      background: repeating-linear-gradient(90deg, #474747 0 1px, transparent 1px 48px) 10px 0 no-repeat;
    }
    .playhead { position: absolute; left: 373px; top: 18px; }
    .playhead::after { content: ""; display: block; width: 1px; height: 240px; margin: -1px 0 0 7px; background: #fff; box-shadow: 0 0 0 1px #222; }
    .strip { background: #373737; }
    .thumb { width: 289px; height: 8px; margin: 2px 3px; border-radius: 4px; background: #757575; }
  `;
  render() {
    return `
      <div class="bar">
        <tool-group dim><button aria-label="Remonter">${icon("back")}</button></tool-group>
        <menu-group items="Édition,Fonctions,Présentation"></menu-group>
        <tool-group>
          <button aria-label="Automation">${icon("automation")}</button>
          <button aria-label="Flex">${icon("flex")}</button>
        </tool-group>
        <tool-group><button class="on" aria-label="Suivre">${icon("catch")}</button></tool-group>
        <tool-group class="push">
          <button class="tool" aria-label="Pointeur">${icon("pointer")}<span class="chev">${icon("down")}</span></button>
          <button class="tool" aria-label="Outil secondaire">${icon("cross")}<span class="chev">${icon("down")}</span></button>
        </tool-group>
        <pop-up class="magnet" label="Magnétisme :" value="Intelligent" style="--w:156px"></pop-up>
        <pop-up class="wide" label="Glissement :" value="Superposition" style="--w:128px"></pop-up>
        <tool-group><button aria-label="Zoom d’onde">${icon("wave")}</button></tool-group>
        <tool-group>
          <button aria-label="Ajuster verticalement">${icon("vfit")}</button>
          <button aria-label="Ajuster horizontalement">${icon("hfit")}</button>
        </tool-group>
        <tool-group>
          <zoom-slider arrow="varrow" label="Zoom vertical" value="44" ticks="0,3,8,16,29,42"></zoom-slider>
          <zoom-slider arrow="harrow" label="Zoom horizontal" value="14" ticks="1,5,8,15,28,42"></zoom-slider>
        </tool-group>
      </div>
      <div class="body">
        <div class="heads">
          <div class="tools">
            <tool-group><button aria-label="Ajouter une piste">${icon("plus")}</button></tool-group>
            <tool-group><button aria-label="Dupliquer la piste">${icon("duplicate")}</button></tool-group>
            <tool-group><button aria-label="Configurer">${icon("config")}</button></tool-group>
          </div>
          <track-header></track-header>
        </div>
        <div class="time">
          <time-ruler></time-ruler>
          <div class="lane"><audio-region>Sans Nom_1#04</audio-region></div>
          <div class="playhead"><svg width="15" height="13"><path d="M1 .500h13v7L7.500 12.500 1 7.500z" fill="#d6d6d6" stroke="#444"/></svg></div>
        </div>
        <div class="strip"></div>
        <div class="strip"></div>
        <div class="strip"><div class="thumb"></div></div>
        <div class="strip"></div>
      </div>`;
  }
}
customElements.define("tracks-editor", TracksEditor);

/* ---------- mixer ---------- */

const LABELS = [
  ["device", "Périphérique audio", 18], ["setting", "Réglage", 18], ["gain", "Réduction du gain", 7], ["eq", "ÉG", 29],
  ["source", "Entrée", 18], ["fx", "Effet audio", 18], ["sends", "Envois", 18], ["output", "Sortie", 18],
  ["group", "Groupe", 18], ["auto", "Automation", 18], ["pan", "Pan", 35], ["db", "dB", 18],
];
const GAIN = [["6", 1], ["3", 18], ["0", 35], ["3", 52], ["6", 70], ["10", 81], ["15", 95], ["20", 106], ["30", 117], ["40", 124], ["∞", 135]];

class MixerLabels extends UiElement {
  styles = `
    :host {
      display: grid;
      grid-template-rows: var(--rows);
      grid-template-columns: minmax(0, 1fr);
      align-items: start;
      align-content: start;
      font-size: 11px;
      color: #adadad;
    }
    span { text-align: right; padding-right: 6px; white-space: nowrap; }
    .scale { display: grid; justify-content: end; }
    svg { overflow: visible; }
    text { font-size: 8px; line-height: 8px; fill: #adadad; text-anchor: end; }
  `;
  render() {
    const labels = LABELS.map(([k, t, h]) => `<span style="grid-row:${ROW[k]};line-height:${h}px">${t}</span>`).join("");
    const nums = GAIN.map(([n, y]) => `<text x="15" y="${y + 3}">${n}</text>`).join("");
    return `${labels}
      <div class="scale" style="grid-row:${ROW.fader}"><svg width="29" height="139">${nums}${ticks(29)}</svg></div>`;
  }
}
customElements.define("mixer-labels", MixerLabels);

class MixerEditor extends UiElement {
  styles = `
    :host {
      display: flex;
      flex-direction: column;
      flex: 1;
      min-height: 0;
      margin: 0 1px 0 2px;
      border: 1px solid #0d0d0d;
      border-radius: 4px;
      background: #0d0d0d;
      overflow: hidden;
    }
    .bar { display: flex; align-items: center; height: 29px; padding: 0 9px 0 8px; background: #484848; border-bottom: 1px solid #111; }
    .bar > * + * { margin-left: 8px; }
    .bar > pop-up { margin-left: 10px; --w: 118px; }
    .bar > .views { margin-left: 118px; }
    .bar > .push { margin-left: auto; }
    .body { flex: 1; min-height: 0; display: grid; grid-template-columns: minmax(0, 1fr) 13px; grid-template-rows: minmax(0, 1fr) 12px; gap: 1px; }
    .desk {
      display: flex;
      background: #606060;
      --rows: 22px 22px 22px 23px 23px 12px 42px 26px 26px 26px 23px 23px 28px 34px 42px 39px 142px 20px 22px 25px;
    }
    mixer-labels, channel-strip { padding-top: 5px; }
    mixer-labels { width: 111px; background: #4d4d4d; border-right: 1px solid #000; }
    channel-strip { width: 67px; border-right: 1px solid #484848; }
    .master { --inset: 16px; }
    .strip { background: #373737; }
  `;
  render() {
    const filters = ["Audio", "Inst", "Aux", "Bus", "Input", "Output", "Master/VCA", "MIDI"]
      .map((t) => `<button class="on text">${t}</button>`).join("");
    return `
      <div class="bar">
        <tool-group dim><button aria-label="Remonter">${icon("back")}</button></tool-group>
        <menu-group items="Édition,Options,Présentation"></menu-group>
        <pop-up power label="Envois sur les curseurs :" value="Non"></pop-up>
        <tool-group class="views">
          <button class="text">Simple</button><button class="text on">Pistes</button><button class="text">Tout</button>
        </tool-group>
        <tool-group class="push">${filters}</tool-group>
        <tool-group>
          <button class="on" aria-label="Une fenêtre">${icon("cols3")}</button>
          <button aria-label="Deux fenêtres">${icon("cols2")}</button>
        </tool-group>
      </div>
      <div class="body">
        <div class="desk">
          <mixer-labels></mixer-labels>
          <channel-strip selected type="audio" name="Audio 1" style="--name:#35587e"></channel-strip>
          <channel-strip type="out" name="Stereo Out" style="--name:#7c1e68"></channel-strip>
          <channel-strip class="master" type="master" name="Master" style="--name:#54337f"></channel-strip>
        </div>
        <div class="strip"></div>
        <div class="strip"></div>
        <div class="strip"></div>
      </div>`;
  }
}
customElements.define("mixer-editor", MixerEditor);
</script>
</body>
</html>
